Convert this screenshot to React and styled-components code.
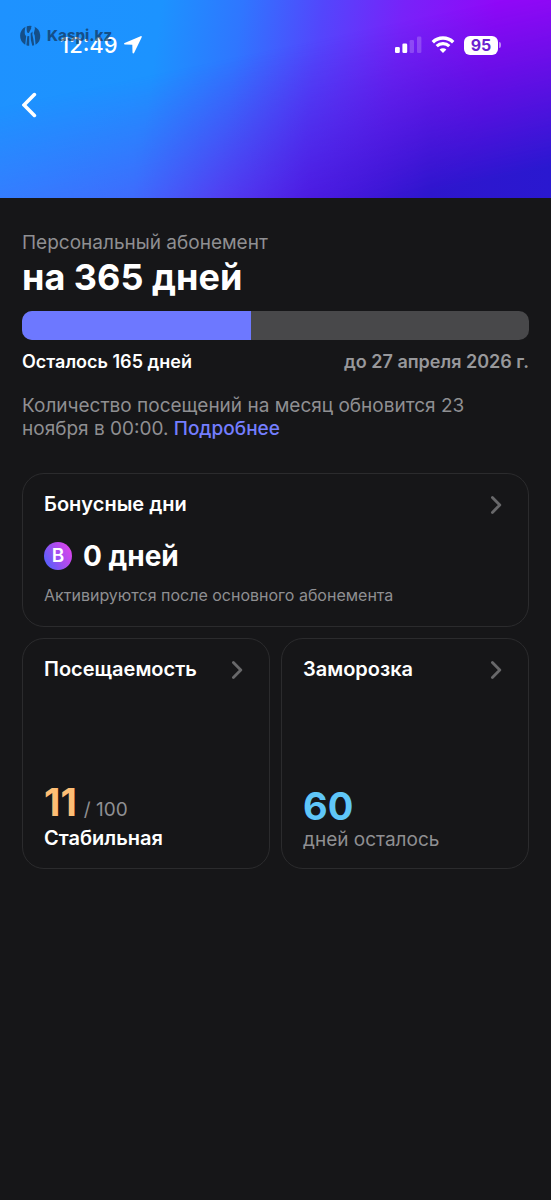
import React from "react";
import styled, { createGlobalStyle } from "styled-components";

const TOTAL_DAYS = 365;
const DAYS_LEFT = 165;

const App = () => (
  <>
    <GlobalStyle />
    <Screen>
      <Hero>
        <Watermark>
          <KaspiLogo />
          <span>Kaspi.kz</span>
        </Watermark>
        <StatusBar>
          <StatusGroup>
            <Clock>12:49</Clock>
            <LocationIcon />
          </StatusGroup>
          <StatusGroup wide>
            <SignalIcon />
            <WifiIcon />
            <Battery>
              <BatteryLevel>95</BatteryLevel>
              <BatteryTip />
            </Battery>
          </StatusGroup>
        </StatusBar>
        <BackButton aria-label="Назад">
          <svg width="16" height="26" viewBox="0 0 16 26" fill="none">
            <path
              d="M12.4 2.6 2 13l10.4 10.4"
              stroke="#fff"
              strokeWidth="3.6"
              strokeLinecap="round"
            />
          </svg>
        </BackButton>
      </Hero>
      <Content>
        <Label>Персональный абонемент</Label>
        <Title>на 365 дней</Title>
        <Progress>
          <ProgressFill style={{ width: `${(DAYS_LEFT / TOTAL_DAYS) * 100}%` }} />
        </Progress>
        <ProgressInfo>
          <span>Осталось 165 дней</span>
          <Until>до 27 апреля 2026 г.</Until>
        </ProgressInfo>
        <Note>
          Количество посещений на месяц обновится 23 ноября в 00:00.{" "}
          <NoteLink href="#details">Подробнее</NoteLink>
        </Note>
        <Cards>
          <Card wide>
            <CardHeader>
              <CardTitle>Бонусные дни</CardTitle>
              <Chevron />
            </CardHeader>
            <BonusRow>
              <BonusBadge>B</BonusBadge>
              <BonusValue>0 дней</BonusValue>
            </BonusRow>
            <Hint>Активируются после основного абонемента</Hint>
          </Card>
          <Card>
            <CardHeader>
              <CardTitle>Посещаемость</CardTitle>
              <Chevron />
            </CardHeader>
            <CardFooter>
              <Score>
                <Big color="#fdbe75">11</Big>
                <Muted>/ 100</Muted>
              </Score>
              <CardTitle>Стабильная</CardTitle>
            </CardFooter>
          </Card>
          <Card>
            <CardHeader>
              <CardTitle>Заморозка</CardTitle>
              <Chevron />
            </CardHeader>
            <CardFooter>
              <Big color="#5fc6f8">60</Big>
              <Muted>дней осталось</Muted>
            </CardFooter>
          </Card>
        </Cards>
      </Content>
    </Screen>
  </>
);

const Chevron = () => (
  <svg width="12" height="20" viewBox="0 0 12 20" fill="none">
    <path
      d="M2.4 3.4 9.8 11l-7.4 7.4"
      stroke="#68686a"
      strokeWidth="2.8"
      strokeLinecap="round"
      strokeLinejoin="round"
    />
  </svg>
);

const KaspiLogo = () => (
  <svg width="22" height="22" viewBox="0 0 22 22" fill="currentColor">
    <path d="M6.2 19.7A10.3 10.3 0 0 1 6.6 1.7C5.9 3.6 5.6 6 5.8 8.4c.1 1.3.6 2 1.4 2.6L6.2 19.7z" />
    <path d="M7.8 1.2a10.3 10.3 0 0 1 5 -.3c-.6.6-.8 1.4-.5 2.3l-2.2 4.2c-.2.5-.6.7-1.1.6-1-.2-1.6-3.2-1.2-6.8z" />
    <path d="M15 1.6a10.3 10.3 0 0 1 1.6 18.1l-.9-9.3-.9-2.1 1-4.1c.3-1 .1-1.9-.8-2.6z" />
    <path d="M8.3 11.2l1.9-.3v9.9a10.3 10.3 0 0 1-2.8-.6l.9-9z" />
    <path d="M11.6 8.6l1.9-2-.1 3.2.9 4 .9 6.4a10.3 10.3 0 0 1-1.9.5l-1.4-5.4-.3-6.7z" />
  </svg>
);

const LocationIcon = () => (
  <svg width="20" height="20" viewBox="0 0 20 20">
    <path
      d="M17.6 1.2 1.6 8.1c-.9.4-.8 1.4.3 1.5l7.4.2.2 7.7c0 1.2 1.2 1.4 1.7.3l7.4-15.4c.4-.9-.2-1.5-1-1.2z"
      fill="#fff"
    />
  </svg>
);

const SignalIcon = () => (
  <svg width="28" height="18" viewBox="0 0 28 18" fill="#fff">
    <rect x="1" y="11" width="4.8" height="6" rx="1.3" />
    <rect x="8.4" y="7.4" width="4.8" height="9.6" rx="1.3" />
    <rect x="15.6" y="4" width="4.4" height="13" rx="1.3" opacity="0.2" />
    <rect x="23" y="0.4" width="4.4" height="16.6" rx="1.3" opacity="0.2" />
  </svg>
);

const WifiIcon = () => (
  <svg width="24" height="18" viewBox="0 0 24 18" fill="none" stroke="#fff">
    <path d="M1.8 6.2a14.6 14.6 0 0 1 20.4 0" strokeWidth="3.4" />
    <path d="M5.7 10.2a9 9 0 0 1 12.6 0" strokeWidth="3.2" />
    <path d="M12 17l-3.4-3.5a4.9 4.9 0 0 1 6.8 0z" fill="#fff" stroke="none" />
  </svg>
);

const GlobalStyle = createGlobalStyle`
  * {
    box-sizing: border-box;
  }

  body {
    margin: 0;
    background: #161618;
  }

  button {
    border: none;
    padding: 0;
    background: transparent;
    color: inherit;
    font: inherit;
    text-align: left;
    cursor: pointer;
  }

  svg {
    display: block;
    flex-shrink: 0;
  }
`;

const Screen = styled.div`
  min-height: 100vh;
  background: #161618;
  color: #fff;
  font-family: Inter, "Liberation Sans", sans-serif;
`;

const Hero = styled.header`
  position: relative;
  isolation: isolate;
  padding: 32px 22px 80px;
  background: linear-gradient(
    98deg,
    #1e92ff 0%,
    #1c93ff 28%,
    #2f76ff 42%,
    #5346fc 56%,
    #7822f9 70%,
    #9008f8 86%,
    #9608f8 100%
  );

  &::before {
    content: "";
    position: absolute;
    inset: 0;
    z-index: -1;
    background: linear-gradient(
      90deg,
      #4a6aff 0%,
      #5058fc 24%,
      #5a30ee 40%,
      #4a17de 56%,
      #2e16cd 78%,
      #2a18d0 100%
    );
    mask-image: linear-gradient(168deg, transparent 34%, #000 90%);
  }
`;

const Watermark = styled.div`
  position: absolute;
  top: 25px;
  left: 19px;
  z-index: 1;
  display: flex;
  align-items: center;
  gap: 6px;
  color: rgba(16, 44, 76, 0.66);
  font-size: 15px;
  line-height: 22px;
  font-weight: 800;
  pointer-events: none;
`;

const StatusBar = styled.div`
  display: flex;
  align-items: center;
  justify-content: space-between;
  padding: 0 28px 0 38px;
  height: 26px;
`;

const StatusGroup = styled.div.withConfig({
  shouldForwardProp: prop => prop !== "wide"
})`
  display: flex;
  align-items: center;
  gap: ${props => (props.wide ? "9px" : "5px")};
`;

const Clock = styled.span`
  font-size: 22px;
  line-height: 26px;
  font-weight: 500;
`;

const Battery = styled.div`
  display: flex;
  align-items: center;
  gap: 1px;
`;

const BatteryLevel = styled.span`
  width: 34px;
  border-radius: 6px;
  background: #fff;
  color: #6a1fd0;
  font-size: 16px;
  line-height: 19px;
  font-weight: 700;
  text-align: center;
`;

const BatteryTip = styled.span`
  width: 2px;
  height: 6px;
  border-radius: 0 2px 2px 0;
  background: rgba(255, 255, 255, 0.5);
`;

const BackButton = styled.button`
  display: block;
  margin-top: 34px;
`;

const Content = styled.main`
  padding: 33px 22px;
`;

const Label = styled.p`
  margin: 0;
  color: #8f8f92;
  font-size: 19px;
  line-height: 24px;
`;

const Title = styled.h1`
  margin: 0;
  font-size: 36px;
  line-height: 44px;
  font-weight: 700;
`;

const Progress = styled.div`
  height: 29px;
  margin-top: 12px;
  border-radius: 10px;
  background: #48484a;
  overflow: hidden;
`;

const ProgressFill = styled.div`
  height: 100%;
  background: #6d78ff;
`;

const ProgressInfo = styled.div`
  display: flex;
  justify-content: space-between;
  margin-top: 10px;
  font-size: 18px;
  line-height: 24px;
  font-weight: 600;
`;

const Until = styled.span`
  color: #98989b;
`;

const Note = styled.p`
  margin: 20px 0 0;
  color: #8f8f92;
  font-size: 19px;
  line-height: 23px;
`;

const NoteLink = styled.a`
  color: #747eff;
  font-weight: 500;
  text-decoration: none;
`;

const Cards = styled.section`
  display: grid;
  grid-template-columns: 1fr 1fr;
  gap: 11px;
  margin-top: 33px;
`;

const Card = styled.button.withConfig({
  shouldForwardProp: prop => prop !== "wide"
})`
  display: flex;
  flex-direction: column;
  grid-column: ${props => (props.wide ? "1 / -1" : "auto")};
  min-height: ${props => (props.wide ? "154px" : "231px")};
  padding: 16px 21px;
  border: 1px solid #2b2b2d;
  border-radius: 22px;
`;

const CardHeader = styled.span`
  display: flex;
  align-items: center;
  justify-content: space-between;
  width: 100%;
  padding-right: 5px;
`;

const CardTitle = styled.span`
  font-size: 20px;
  line-height: 28px;
  font-weight: 600;
`;

const BonusRow = styled.span`
  display: flex;
  align-items: center;
  gap: 11px;
  margin-top: 20px;
`;

const BonusBadge = styled.span`
  width: 28px;
  border-radius: 50%;
  background: linear-gradient(60deg, #4a62ff 5%, #a04ff0 50%, #d545ec 85%);
  font-size: 19px;
  line-height: 28px;
  font-weight: 600;
  text-align: center;
`;

const BonusValue = styled.span`
  font-size: 28px;
  line-height: 36px;
  font-weight: 700;
`;

const Hint = styled.span`
  margin-top: 11px;
  color: #8f8f92;
  font-size: 16px;
  line-height: 20px;
`;

const CardFooter = styled.span`
  display: flex;
  flex-direction: column;
  margin-top: auto;
`;

const Score = styled.span`
  display: flex;
  align-items: baseline;
  gap: 7px;
`;

const Big = styled.span`
  color: ${props => props.color};
  font-size: 38px;
  line-height: 44px;
  font-weight: 700;
`;

const Muted = styled.span`
  color: #8f8f92;
  font-size: 19px;
  line-height: 24px;
`;

export default App;
